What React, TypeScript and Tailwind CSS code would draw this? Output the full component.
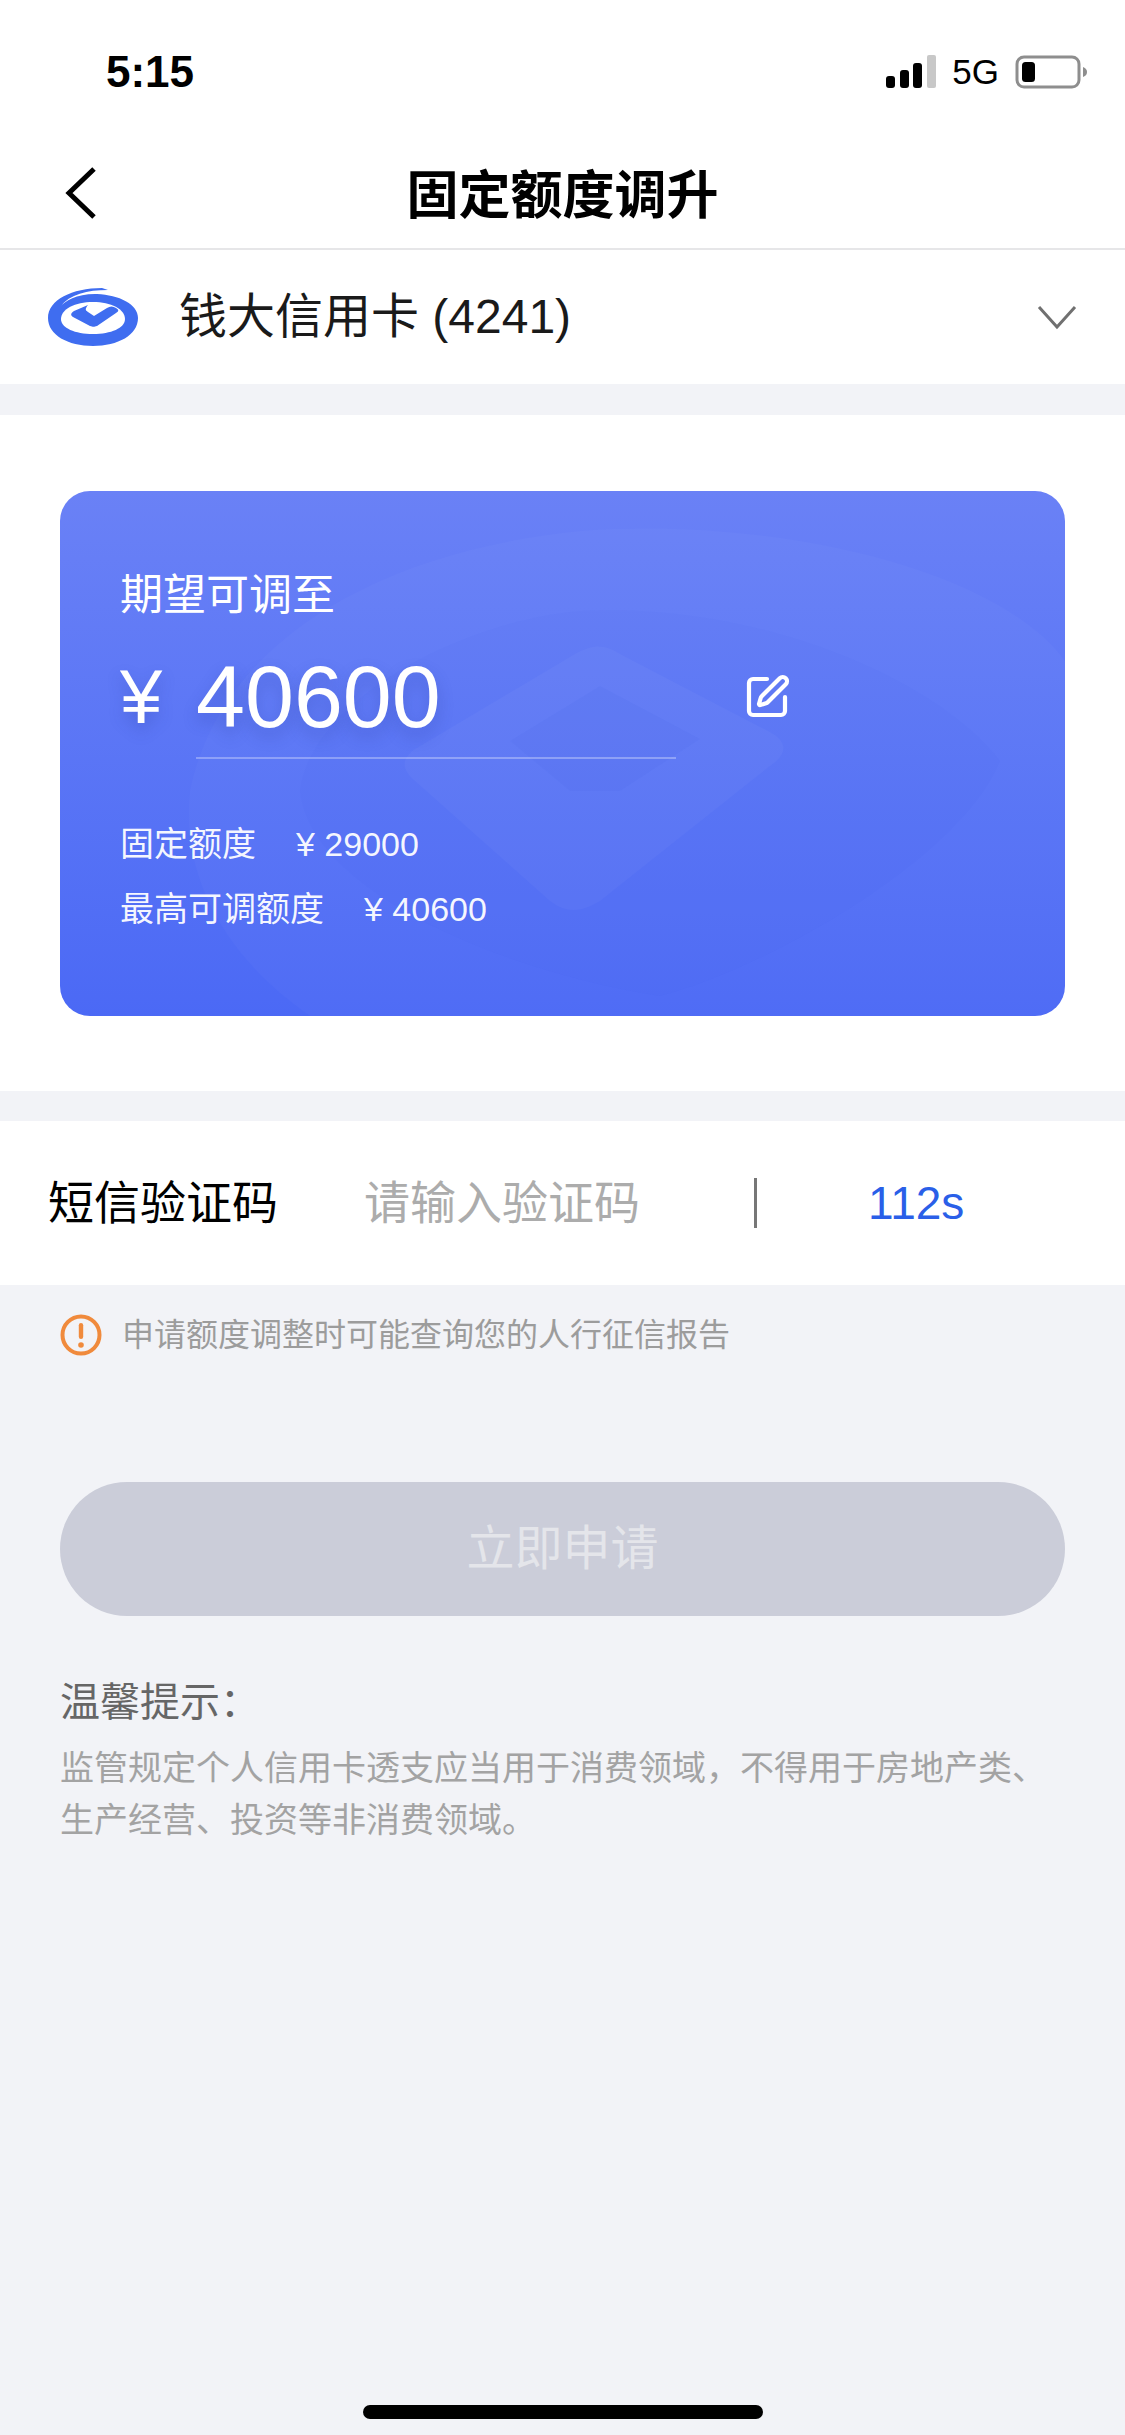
import { SquarePen } from "lucide-react";

const font = "font-['Liberation_Sans','Noto_Sans_CJK_SC',sans-serif]";

const SignalIcon = () => (
  <svg width="50" height="34" viewBox="0 0 50 34">
    <rect x="0" y="21" width="9" height="12" rx="3" fill="#000" />
    <rect x="14" y="15" width="9" height="18" rx="3" fill="#000" />
    <rect x="27" y="8" width="9" height="25" rx="3" fill="#000" />
    <rect x="41" y="0" width="9" height="33" rx="2" fill="#c8c8c8" />
  </svg>
);

const BatteryIcon = () => (
  <svg width="72" height="34" viewBox="0 0 72 34">
    <rect x="2" y="2" width="62" height="30" rx="7" fill="none" stroke="#8e8e8e" stroke-width="3" />
    <rect x="7" y="7" width="13" height="20" rx="3.5" fill="#000" />
    <path d="M68 12c3 1 4 3 4 5s-1 4-4 5z" fill="#8e8e8e" />
  </svg>
);

const BankLogo = () => (
  <svg width="92" height="60" viewBox="0 0 92 60">
    <path
      d="M55 1C25 1 1 13 1 31c0 17 20 28 45 28s45-11 45-28C91 17 72 8 50 7 30 6.500 18 14 13 20 23 7 40 3 61 3z"
      fill="#3f6df0"
    />
    <path
      d="M46 15c-18 0-32 7-32 17 0 9 14 15 32 15s32-6 32-15c0-10-14-17-32-17z"
      fill="#fff"
    />
    <path
      d="M26 30c-3-2-2-4 1-6l14-6c-3 4-3 5 0 7l6 4 13-8c3-2 6-2 9 0 3 2 3 3 0 5L50 39c-3 1-4 1-7 0z"
      fill="#3f6df0"
    />
  </svg>
);

const CardWatermark = () => (
  <svg
    className="absolute inset-0 h-full w-full"
    viewBox="0 0 1005 525"
    preserveAspectRatio="none"
  >
    <path
      d="M130 300C160 150 320 60 520 40c200-15 420 40 485 130v355H250C170 470 120 390 130 300z"
      fill="#fff"
      fill-opacity="0.025"
    />
    <path
      d="M240 300 C250 210 400 130 520 120 C700 110 880 190 940 270 C900 370 700 480 600 505 C440 480 250 400 240 300z"
      fill="#3050e0"
      fill-opacity="0.035"
    />
    <path
      d="M355 290c-14-12-14-22 0-32l160-95c18-10 30-10 45 0l150 78c18 10 18 22 0 34L540 410c-20 12-34 12-50 0z"
      fill="#fff"
      fill-opacity="0.03"
    />
    <path
      d="M450 250 540 195 640 248 560 300 510 300z"
      fill="#3050e0"
      fill-opacity="0.05"
    />
  </svg>
);

const QuotaLine = ({ label, value }: { label: string; value: string }) => (
  <div className="flex h-[65px] items-center gap-[40px] text-[34px] text-white/95">
    <span>{label}</span>
    <span>¥ {value}</span>
  </div>
);

export default function App() {
  return (
    <div className={`${font} flex h-[2435px] w-[1125px] flex-col overflow-hidden bg-[#f2f3f7]`}>
      <div className="bg-white">
        <div className="flex h-[144px] items-center justify-between pl-[106px] pr-[38px]">
          <span className="text-[44px] font-bold text-black">5:15</span>
          <div className="flex items-center gap-[16px]">
            <SignalIcon />
            <span className="text-[35px] text-black">5G</span>
            <BatteryIcon />
          </div>
        </div>
        <div className="relative flex h-[106px] items-center justify-center border-b-2 border-[#e6e6e8]">
          <svg
            className="absolute left-[64px] top-[22px]"
            width="34"
            height="54"
            viewBox="0 0 34 54"
          >
            <path d="M30 3 5 27l25 24" fill="none" stroke="#000" stroke-width="5" />
          </svg>
          <span className="text-[52px] font-bold text-black">固定额度调升</span>
        </div>
        <div className="flex h-[134px] items-center pl-[47px] pr-[48px]">
          <BankLogo />
          <span className="ml-[40px] text-[48px] text-[#1a1a1a]">钱大信用卡 (4241)</span>
          <svg className="ml-auto" width="40" height="26" viewBox="0 0 40 26">
            <path d="M2 3l18 20L38 3" fill="none" stroke="#707070" stroke-width="3" />
          </svg>
        </div>
      </div>

      <div className="mt-[31px] bg-white px-[60px] pb-[75px] pt-[76px]">
        <div className="relative h-[525px] overflow-hidden rounded-[30px] bg-gradient-to-b from-[#6a81f6] to-[#4b69f5] pl-[60px]">
          <CardWatermark />
          <div className="relative">
            <div className="pt-[76px] text-[43px] leading-[56px] text-white">期望可调至</div>
            <div className="mt-[22px] flex items-center">
              <span className="w-[76px] text-[76px] leading-[104px] text-white [text-shadow:0_8px_16px_rgba(40,60,160,0.3)]">
                ¥
              </span>
              <span className="w-[480px] text-[88px] leading-[104px] text-white [text-shadow:0_8px_16px_rgba(40,60,160,0.3)]">
                40600
              </span>
              <SquarePen className="ml-[67px] h-[48px] w-[48px] text-white" strokeWidth={2.1} />
            </div>
            <div className="ml-[76px] mt-[8px] h-[2px] w-[480px] bg-white/30" />
            <div className="mt-[53px]">
              <QuotaLine label="固定额度" value="29000" />
              <QuotaLine label="最高可调额度" value="40600" />
            </div>
          </div>
        </div>
      </div>

      <div className="mt-[30px] flex h-[164px] items-center bg-white pl-[48px]">
        <span className="w-[316px] text-[46px] text-black">短信验证码</span>
        <span className="w-[390px] text-[46px] text-[#acacac]">请输入验证码</span>
        <div className="h-[50px] w-[3px] bg-[#777]" />
        <span className="ml-[111px] text-[46px] text-[#2a5fe8]">112s</span>
      </div>

      <div className="mt-[26px] flex items-center pl-[60px]">
        <svg width="42" height="42" viewBox="0 0 42 42">
          <circle cx="21" cy="21" r="18.500" fill="none" stroke="#f08a3c" stroke-width="4" />
          <rect x="18.800" y="9" width="4.400" height="16" rx="2.200" fill="#f08a3c" />
          <circle cx="21" cy="31" r="2.800" fill="#f08a3c" />
        </svg>
        <span className="ml-[20px] text-[32px] text-[#9c9c9c]">申请额度调整时可能查询您的人行征信报告</span>
      </div>

      <div className="mx-[60px] mt-[123px] flex h-[134px] items-center justify-center rounded-full bg-[#cbcdd9]">
        <span className="text-[48px] text-[#e4e5ea]">立即申请</span>
      </div>

      <div className="mx-[60px] mt-[60px]">
        <div className="text-[40px] leading-[52px] text-[#666]">温馨提示：</div>
        <p className="mt-[14px] text-[34px] leading-[52px] text-[#a3a3a3]">
          监管规定个人信用卡透支应当用于消费领域，不得用于房地产类、
          <br />
          生产经营、投资等非消费领域。
        </p>
      </div>

      <div className="mb-[16px] mt-auto h-[14px] w-[400px] self-center rounded-full bg-black" />
    </div>
  );
}
